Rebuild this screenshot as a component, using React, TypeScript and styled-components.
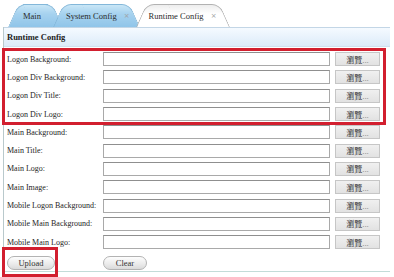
import React from 'react';
import styled, { createGlobalStyle, css } from 'styled-components';

const GlobalStyle = createGlobalStyle`
  html, body {
    margin: 0;
    padding: 0;
    background: #ffffff;
  }
  body {
    font-family: "Liberation Serif", "Times New Roman", serif;
    color: #222;
  }
`;

const PageSt = styled.div`
  width: 394px;
  height: 277px;
  box-sizing: border-box;
  padding: 0 4px 0 3px;
  overflow: hidden;
`;

const TabStripSt = styled.div`
  height: 27px;
  display: flex;
  align-items: flex-end;
  padding-left: 5px;
`;

const tabSide = (active?: boolean) => css`
  content: '';
  position: absolute;
  top: 0;
  bottom: 0;
  border: 1px solid ${active ? '#b2b2b2' : '#83b7d9'};
  border-bottom: none;
  background: ${active
    ? 'linear-gradient(#ededed, #ffffff 40%)'
    : 'linear-gradient(#c9e6f6, #a6d2ef 40%, #90c5e9)'};
  transform-origin: bottom;
  z-index: -1;
`;

const TabSt = styled.div<{ $active?: boolean; $pl: number; $pr: number; $overlap: number; $z: number }>`
  position: relative;
  height: 22px;
  display: flex;
  align-items: center;
  gap: 7px;
  padding: 1px ${(p) => p.$pr}px 0 ${(p) => p.$pl}px;
  margin-left: ${(p) => -p.$overlap}px;
  font-size: 8.5px;
  color: #2a2a2a;
  z-index: ${(p) => p.$z};
  white-space: nowrap;

  &::before {
    ${(p) => tabSide(p.$active)};
    left: 0;
    right: 45%;
    border-right: none;
    border-radius: 8px 0 0 0;
    transform: skewX(-24deg);
  }
  &::after {
    ${(p) => tabSide(p.$active)};
    left: 45%;
    right: 0;
    border-left: none;
    border-radius: 0 8px 0 0;
    transform: skewX(24deg);
  }
`;

const CloseSt = styled.span`
  color: #a0a0a0;
  font-family: "DejaVu Sans", sans-serif;
  font-size: 7px;
`;

const PanelSt = styled.div`
  border-left: 1px solid #b9c9cc;
  border-bottom: 1px solid #c3dcd8;
  height: 245px;
  box-sizing: border-box;
`;

const HeaderSt = styled.div`
  height: 20px;
  box-sizing: border-box;
  border-top: 1px solid #c3d6e6;
  border-bottom: 1px solid #d0e0ee;
  background: linear-gradient(#f5faff, #dcebf9);
  display: flex;
  align-items: center;
  padding-left: 3px;
  font-weight: bold;
  font-size: 8.5px;
  color: #222;
`;

const RowsSt = styled.div`
  padding-top: 3px;
`;

const MarkedGroupSt = styled.div`
  position: relative;
  z-index: 2;
  width: 380px;
  outline: 3px solid #d21f2f;
  outline-offset: -1px;
`;

const RowSt = styled.div`
  height: 18.3px;
  display: grid;
  grid-template-columns: 96px 227px 50px;
  align-items: center;
  padding-left: 3px;
`;

const LabelSt = styled.span`
  font-size: 8px;
  color: #1e1e1e;
  white-space: nowrap;
`;

const InputSt = styled.div`
  height: 14px;
  box-sizing: border-box;
  background: #fff;
  border: 1px solid #a9a9a9;
  border-top-color: #8f8f8f;
`;

const BrowseSt = styled.div`
  margin-left: 5px;
  height: 14px;
  box-sizing: border-box;
  border: 1px solid #c6c6c6;
  background: linear-gradient(#f0f0f0, #e2e2e2);
  display: flex;
  align-items: center;
  justify-content: center;
  font-family: "Noto Sans CJK TC", sans-serif;
  font-size: 8px;
  color: #333;
  span {
    color: #999;
  }
`;

const FooterSt = styled.div`
  height: 20.7px;
  display: flex;
  align-items: center;
`;

const UploadMarkSt = styled.div`
  margin-left: 1px;
  padding: 6px 0 4px 2px;
  outline: 3px solid #d21f2f;
  position: relative;
  z-index: 2;
  display: flex;
`;

const PillSt = styled.div<{ $w: number }>`
  width: ${(p) => p.$w}px;
  height: 14px;
  box-sizing: border-box;
  border: 1px solid #b3b3b3;
  border-radius: 8px;
  background: linear-gradient(#fdfdfd, #ececec 55%, #dadada);
  display: flex;
  align-items: center;
  justify-content: center;
  font-size: 8.5px;
  color: #333;
`;

const ClearWrapSt = styled.div`
  margin-left: 48px;
  margin-top: 2px;
`;

const logonFields = ['Logon Background:', 'Logon Div Background:', 'Logon Div Title:', 'Logon Div Logo:'];
const otherFields = [
  'Main Background:',
  'Main Title:',
  'Main Logo:',
  'Main Image:',
  'Mobile Logon Background:',
  'Mobile Main Background:',
  'Mobile Main Logo:',
];

function FileRow({ label }: { label: string }) {
  return (
    <RowSt>
      <LabelSt>{label}</LabelSt>
      <InputSt />
      <BrowseSt>
        瀏覽<span>...</span>
      </BrowseSt>
    </RowSt>
  );
}

export default function App() {
  return (
    <PageSt>
      <GlobalStyle />
      <TabStripSt>
        <TabSt $pl={15} $pr={22} $overlap={0} $z={1}>
          Main
        </TabSt>
        <TabSt $pl={13} $pr={11} $overlap={10} $z={2}>
          System Config <CloseSt>×</CloseSt>
        </TabSt>
        <TabSt $active $pl={13} $pr={13} $overlap={5} $z={3}>
          Runtime Config <CloseSt>×</CloseSt>
        </TabSt>
      </TabStripSt>
      <PanelSt>
        <HeaderSt>Runtime Config</HeaderSt>
        <RowsSt>
          <MarkedGroupSt>
            {logonFields.map((f) => (
              <FileRow key={f} label={f} />
            ))}
          </MarkedGroupSt>
          {otherFields.map((f) => (
            <FileRow key={f} label={f} />
          ))}
        </RowsSt>
        <FooterSt>
          <UploadMarkSt>
            <PillSt $w={48}>Upload</PillSt>
          </UploadMarkSt>
          <ClearWrapSt>
            <PillSt $w={44}>Clear</PillSt>
          </ClearWrapSt>
        </FooterSt>
      </PanelSt>
    </PageSt>
  );
}
